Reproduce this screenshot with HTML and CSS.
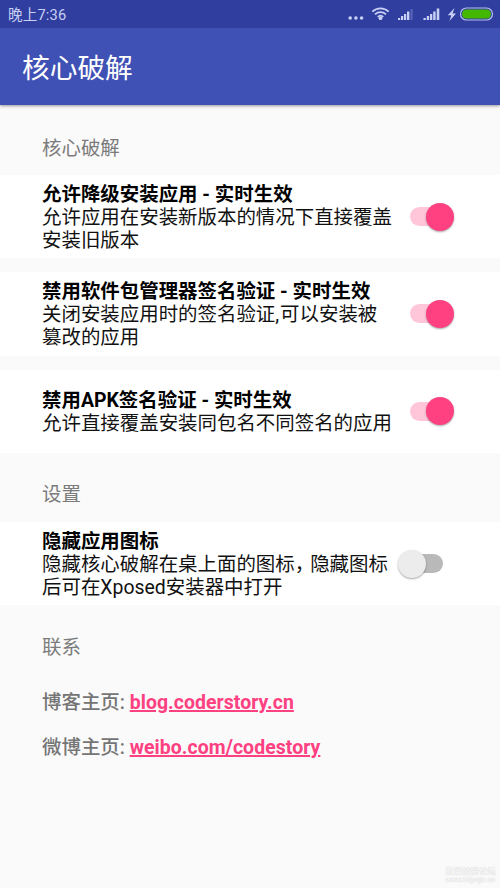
FILE: index.html
```html
<!DOCTYPE html>
<html lang="zh-CN">
<head>
<meta charset="utf-8">
<title>核心破解</title>
<link rel="stylesheet" href="styles.css">
</head>
<body>
<header class="header">
  <div class="status">
    <span class="time">晚上7:36</span>
    <svg class="indicators" width="152" height="28" viewBox="0 0 152 28">
      <g fill="#c9d0f5">
        <circle cx="2.2" cy="18" r="1.8"/><circle cx="7.9" cy="18" r="1.8"/><circle cx="13.6" cy="18" r="1.8"/>
        <circle cx="32.5" cy="18.2" r="1.9"/>
        <path d="M50 20v-2h2.2v2zM53 20v-4h2.2v4zM56 20v-6h2.2v6zM59 20v-8.5h2.4V20z"/>
        <path d="M75.5 20v-2h2.3v2zM78.8 20v-4h2.3v4zM82 20v-6h2.3v6zM85.2 20v-8.5h2.4V20zM88.7 20V8.5h2.6V20z"/>
        <path d="M106.5 8l-6.7 7.2h3.5l-1.8 5.8 6.5-7.5h-3.5z"/>
      </g>
      <path d="M62.6 20V9h2v11z" fill="#5966b8"/>
      <path d="M24.3 11.6c4.8-4.4 11.6-4.4 16.4 0M27 14.3c3.2-2.9 7.8-2.9 11 0M29.7 16.8c1.7-1.5 3.9-1.5 5.6 0" fill="none" stroke="#c9d0f5" stroke-width="1.8"/>
      <rect x="112.5" y="8" width="32" height="12" rx="6" fill="none" stroke="#b3bde9" stroke-width="1.2"/>
      <rect x="114" y="9.5" width="29" height="9" rx="4.5" fill="#44b800"/>
    </svg>
  </div>
  <h1 class="title">核心破解</h1>
</header>
<main class="content">
  <h2 class="section">核心破解</h2>
  <div class="cards">
    <div class="card">
      <div class="text"><b>允许降级安装应用 - 实时生效</b><br>允许应用在安装新版本的情况下直接覆盖<br>安装旧版本</div>
      <div class="switch on"></div>
    </div>
    <div class="card">
      <div class="text"><b>禁用软件包管理器签名验证 - 实时生效</b><br>关闭安装应用时的签名验证<span class="ascii-comma">,</span>可以安装被<br>篡改的应用</div>
      <div class="switch on"></div>
    </div>
    <div class="card">
      <div class="text"><b>禁用APK签名验证 - 实时生效</b><br>允许直接覆盖安装同包名不同签名的应用</div>
      <div class="switch on"></div>
    </div>
  </div>
  <h2 class="section">设置</h2>
  <div class="card">
    <div class="text"><b>隐藏应用图标</b><br>隐藏核心破解在桌上面的图标<span class="comma">，</span>隐藏图标<br>后可在Xposed安装器中打开</div>
    <div class="switch"></div>
  </div>
  <h2 class="section">联系</h2>
  <div class="links">
    <p class="link-row">博客主页: <a class="link" href="#">blog.coderstory.cn</a></p>
    <p class="link-row">微博主页: <a class="link" href="#">weibo.com/codestory</a></p>
  </div>
</main>
<div class="watermark"><span>吾爱破解论坛</span><small>www.52pojie.cn</small></div>
</body>
</html>
```
FILE: styles.css
```css
* { box-sizing: border-box; }
body {
  margin: 0;
  position: relative;
  height: 888px;
  overflow: hidden;
  background: #fafafa;
  color: #111;
  font: 19.44px/22.8px Roboto, "Noto Sans CJK SC", sans-serif;
}
.header {
  height: 105px;
  background: #3f51b5;
  box-shadow: 0 1px 3px rgba(0, 0, 0, .4);
}
.status {
  height: 28px;
  padding-left: 8px;
  display: flex;
  align-items: center;
  justify-content: space-between;
  background: #303f9f;
}
.time {
  padding-top: 2px;
  font-size: 14.6px;
  letter-spacing: .15px;
  color: #c9d0f5;
}
.indicators { display: block; }
.title {
  margin: 0;
  padding: 2px 0 0 22px;
  font-size: 27.7px;
  font-weight: 400;
  line-height: 77px;
  color: #fff;
}
.content { padding-top: 1px; }
.section {
  margin: 0;
  height: 69px;
  padding: 17px 42px 0;
  display: flex;
  align-items: center;
  font-size: 19.44px;
  font-weight: 400;
  color: #7b7b7b;
}
.cards { display: grid; gap: 14px; }
.card {
  height: 83.3px;
  padding: 0 46.5px 0 42px;
  display: flex;
  align-items: center;
  justify-content: space-between;
  background: #fff;
}
.text { padding-top: 3.4px; white-space: nowrap; }
.text b { font-weight: 700; color: #000; }
.comma { letter-spacing: -4px; }
.ascii-comma { letter-spacing: 1px; }
.switch {
  flex: none;
  width: 56px;
  height: 28px;
  display: flex;
  align-items: center;
}
.switch::before {
  content: "";
  width: 33px;
  height: 19px;
  margin-left: 12px;
  border-radius: 10px;
  background: #b9b9b9;
}
.switch::after {
  content: "";
  width: 28px;
  height: 28px;
  margin-left: -45px;
  border-radius: 50%;
  background: #ececec;
  box-shadow: 0 1px 2px rgba(0, 0, 0, .35);
}
.switch.on::before { background: #ffc6d9; }
.switch.on::after { margin-left: -17px; background: #ff4081; }
.links { padding: 5.5px 42px 0; }
.link-row {
  margin: 0;
  line-height: 45.5px;
  font-weight: 500;
  color: #757575;
}
.link {
  color: #ff4081;
  font-weight: 700;
  letter-spacing: .06px;
  text-decoration-thickness: 1.5px;
}
.watermark {
  position: absolute;
  right: 4px;
  bottom: 3px;
  display: grid;
  justify-items: center;
  font-size: 8.5px;
  line-height: 10px;
  color: #fff;
  text-shadow: 0 0 1px #ccc, 0 0 1px #ccc;
}
.watermark small { font-size: 7px; line-height: 9px; }
```
